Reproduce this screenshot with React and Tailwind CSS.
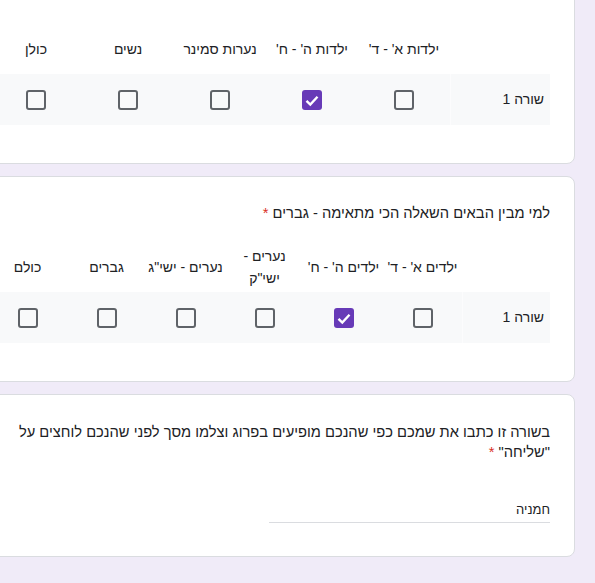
import React from "react";

const font = { fontFamily: '"Liberation Sans", Arial, sans-serif' };

function Box({ checked }) {
  if (checked) {
    return (
      <div className="w-5 h-5 rounded-[3px] bg-[#673ab7] flex items-center justify-center">
        <svg width="20" height="20" viewBox="0 0 20 20">
          <polyline points="4.5,10.8 8.3,14.6 15.5,6.8" fill="none" stroke="#ffffff" strokeWidth="2.4" />
        </svg>
      </div>
    );
  }
  return <div className="w-5 h-5 rounded-[3px] border-2 border-[#5f6368] bg-transparent" />;
}

function Grid({ headers, checkedIdx, template }) {
  return (
    <div>
      <div className={`grid ${template} h-[50px]`}>
        <div />
        {headers.map((h, i) => (
          <div key={i} className="flex items-center justify-center text-center text-[14px] leading-[22px] text-[#202124]">
            {h}
          </div>
        ))}
      </div>
      <div className={`grid ${template} h-[51px] bg-[#f8f9fa]`}>
        <div className="flex items-center pr-[6px] text-[14px] text-[#202124] border-l border-[#fcfcfd]">שורה 1</div>
        {headers.map((h, i) => (
          <div key={i} className="flex items-center justify-center">
            <Box checked={i === checkedIdx} />
          </div>
        ))}
      </div>
    </div>
  );
}

function Star() {
  return <span className="text-[#d93025]"> *</span>;
}

export default function App() {
  return (
    <div className="min-h-screen bg-[#f0ebf8] overflow-hidden" style={font}>
      <div className="w-[611px] ml-[-36px] flex flex-col gap-3">
        <div dir="rtl" className="mt-[-45px] bg-white border border-[#dadce0] rounded-lg px-6 pt-6 pb-[38px]">
          <div className="text-[14.7px] leading-[24px] text-[#202124] mb-[20px]">
            למי מבין הבאים השאלה הכי מתאימה - נשים<Star />
          </div>
          <Grid
            template="grid-cols-[100px_repeat(5,92px)]"
            headers={["ילדות א' - ד'", "ילדות ה' - ח'", "נערות סמינר", "נשים", "כולן"]}
            checkedIdx={1}
          />
        </div>

        <div dir="rtl" className="bg-white border border-[#dadce0] rounded-lg px-6 pt-6 pb-[38px]">
          <div className="text-[14.7px] leading-[24px] text-[#202124] mb-[17px]">
            למי מבין הבאים השאלה הכי מתאימה - גברים<Star />
          </div>
          <Grid
            template="grid-cols-[88px_repeat(6,79px)]"
            headers={[
              "ילדים א' - ד'",
              "ילדים ה' - ח'",
              <span key="k">
                נערים -<br />
                ישי"ק
              </span>,
              'נערים - ישי"ג',
              "גברים",
              "כולם",
            ]}
            checkedIdx={1}
          />
        </div>

        <div dir="rtl" className="bg-white border border-[#dadce0] rounded-lg px-6 pt-[27px] pb-[33px]">
          <div className="text-[14.7px] leading-[20px] text-[#202124] mb-[36px]">
            <div className="whitespace-nowrap">
              בשורה זו כתבו את שמכם כפי שהנכם מופיעים בפרוג וצלמו מסך לפני שהנכם לוחצים על
            </div>
            <div>
              "שליחה"<Star />
            </div>
          </div>
          <div className="w-[281px] h-[25px] border-b border-[#dadce0] flex items-center text-[13px] text-[#202124]">
            חמניה
          </div>
        </div>
      </div>
    </div>
  );
}
